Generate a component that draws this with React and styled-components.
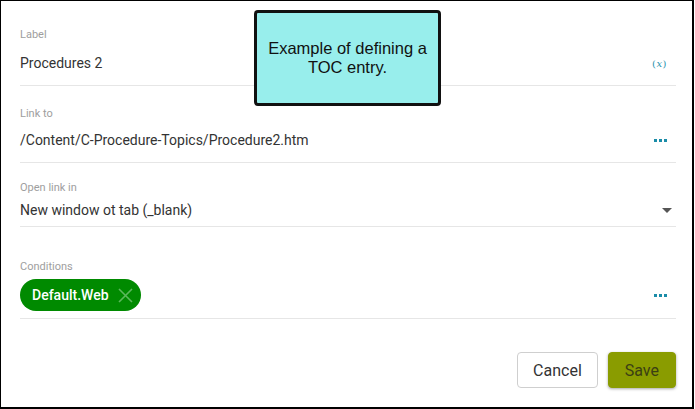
import React from "react";
import styled, { createGlobalStyle } from "styled-components";

const GlobalStyle = createGlobalStyle`
  html, body { margin: 0; padding: 0; background: #fff; }
  * { box-sizing: border-box; }
`;

const Frame = styled.div`
  position: relative;
  width: 694px;
  height: 409px;
  border-top: 1px solid #000;
  border-left: 1px solid #000;
  border-right: 2px solid #000;
  border-bottom: 2px solid #000;
  font-family: Roboto, "Liberation Sans", sans-serif;
  display: flex;
  flex-direction: column;
  padding: 0 16px 0 19px;
`;

const Field = styled.div`
  display: flex;
  flex-direction: column;
  margin-top: ${({ top }) => top}px;
  padding-bottom: ${({ bottom }) => bottom}px;
  border-bottom: 1px solid #e6e6e6;
`;

const Label = styled.div`
  font-size: 11px;
  line-height: 13px;
  color: #9e9e9e;
`;

const Row = styled.div`
  display: flex;
  align-items: center;
  justify-content: space-between;
  height: ${({ h }) => h || 20}px;
  margin-top: ${({ gap }) => gap}px;
  padding-right: 9px;
`;

const Value = styled.div`
  font-size: 14px;
  color: #333;
  line-height: 20px;
`;

const VarIcon = styled.span`
  font-family: "DejaVu Serif", serif;
  font-size: 10px;
  color: #2a93ad;
  letter-spacing: 0.5px;
  i { font-style: italic; }
`;

const Dots = styled.span`
  display: flex;
  gap: 2px;
  span {
    width: 3px;
    height: 3px;
    background: #1a8ca8;
  }
`;

const Caret = styled.span`
  width: 0;
  height: 0;
  margin-right: -5px;
  border-left: 5px solid transparent;
  border-right: 5px solid transparent;
  border-top: 5px solid #555;
`;

const Chip = styled.div`
  display: inline-flex;
  align-items: center;
  gap: 9px;
  height: 32px;
  padding: 0 8px 0 12px;
  border-radius: 16px;
  background: #008a00;
  color: #fff;
  font-size: 14px;
  font-weight: 500;
`;

const Footer = styled.div`
  display: flex;
  justify-content: flex-end;
  gap: 10px;
  margin-top: 33px;
`;

const Button = styled.button`
  height: 36px;
  padding: 0 ${({ primary }) => (primary ? 16 : 15)}px;
  border-radius: 4px;
  font-family: Roboto, "Liberation Sans", sans-serif;
  font-size: 16px;
  color: ${({ primary }) => (primary ? "#3b3f14" : "#333")};
  background: ${({ primary }) => (primary ? "#8a9c00" : "#fff")};
  border: 1px solid ${({ primary }) => (primary ? "#8a9c00" : "#cfcfcf")};
  box-shadow: ${({ primary }) => (primary ? "0 1px 3px rgba(0,0,0,0.35)" : "none")};
`;

const Callout = styled.div`
  position: absolute;
  left: 253px;
  top: 9px;
  width: 187px;
  height: 96px;
  background: #98eeec;
  border: 3px solid #111;
  border-radius: 4px;
  display: flex;
  align-items: center;
  justify-content: center;
  text-align: center;
  padding: 0 8px;
  font-family: "Liberation Sans", Arial, sans-serif;
  font-size: 16.5px;
  line-height: 19px;
  color: #111;
`;

const More = () => (
  <Dots>
    <span />
    <span />
    <span />
  </Dots>
);

const Close = () => (
  <svg width="15" height="15" viewBox="0 0 15 15">
    <path d="M1 1L14 14M14 1L1 14" stroke="#5cb85c" strokeWidth="1.6" />
  </svg>
);

export default function App() {
  return (
    <>
      <GlobalStyle />
      <Frame>
        <Field top={27} bottom={12}>
          <Label>Label</Label>
          <Row gap={12}>
            <Value>Procedures 2</Value>
            <VarIcon>
              (<i>x</i>)
            </VarIcon>
          </Row>
        </Field>
        <Field top={21} bottom={12}>
          <Label>Link to</Label>
          <Row gap={10}>
            <Value>/Content/C-Procedure-Topics/Procedure2.htm</Value>
            <More />
          </Row>
        </Field>
        <Field top={18} bottom={6}>
          <Label>Open link in</Label>
          <Row gap={6}>
            <Value>New window ot tab (_blank)</Value>
            <Caret />
          </Row>
        </Field>
        <Field top={33} bottom={7}>
          <Label>Conditions</Label>
          <Row gap={6} h={32}>
            <Chip>
              Default.Web
              <Close />
            </Chip>
            <More />
          </Row>
        </Field>
        <Footer>
          <Button>Cancel</Button>
          <Button primary>Save</Button>
        </Footer>
        <Callout>Example of defining a TOC entry.</Callout>
      </Frame>
    </>
  );
}
